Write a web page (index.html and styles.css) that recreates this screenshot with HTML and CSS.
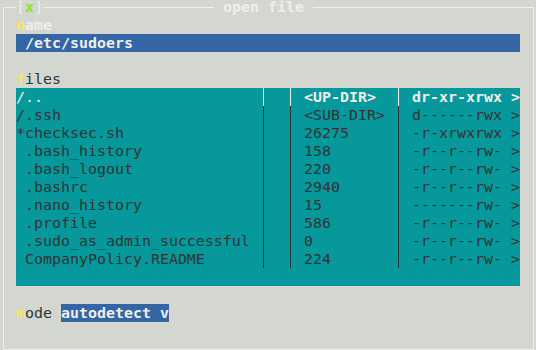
FILE: index.html
```html
<!DOCTYPE html>
<html lang="en">

<head>
    <meta charset="UTF-8">
    <meta name="viewport" content="width=device-width, initial-scale=1.0">
    <title>open file</title>
    <link rel="stylesheet" href="styles.css">
</head>

<body>
    <div class="frame">
        <!-- title bar over the top border -->
        <div class="titlebar">
            <span class="close">[<b class="green">x</b>]</span>
            <span class="title"> open file </span>
        </div>

        <div class="label focus"><b class="key">n</b>ame</div>
        <div class="input"> /etc/sudoers</div>

        <div class="label gap"><span class="key">f</span>iles</div>
        <div class="list">
            <div class="row current">
                <span>/..</span><span class="sep"></span><span class="sep cell"><b>&lt;UP-DIR&gt;</b></span><span class="sep cell"><b>dr-xr-xrwx &gt;</b></span>
            </div>
            <div class="row">
                <span>/.ssh</span><span class="sep"></span><span class="sep cell">&lt;SUB-DIR&gt;</span><span class="sep cell">d------rwx &gt;</span>
            </div>
            <div class="row">
                <span>*checksec.sh</span><span class="sep"></span><span class="sep cell">26275</span><span class="sep cell">-r-xrwxrwx &gt;</span>
            </div>
            <div class="row">
                <span> .bash_history</span><span class="sep"></span><span class="sep cell">158</span><span class="sep cell">-r--r--rw- &gt;</span>
            </div>
            <div class="row">
                <span> .bash_logout</span><span class="sep"></span><span class="sep cell">220</span><span class="sep cell">-r--r--rw- &gt;</span>
            </div>
            <div class="row">
                <span> .bashrc</span><span class="sep"></span><span class="sep cell">2940</span><span class="sep cell">-r--r--rw- &gt;</span>
            </div>
            <div class="row">
                <span> .nano_history</span><span class="sep"></span><span class="sep cell">15</span><span class="sep cell">-------rw- &gt;</span>
            </div>
            <div class="row">
                <span> .profile</span><span class="sep"></span><span class="sep cell">586</span><span class="sep cell">-r--r--rw- &gt;</span>
            </div>
            <div class="row">
                <span> .sudo_as_admin_successful</span><span class="sep"></span><span class="sep cell">0</span><span class="sep cell">-r--r--rw- &gt;</span>
            </div>
            <div class="row">
                <span> CompanyPolicy.README</span><span class="sep"></span><span class="sep cell">224</span><span class="sep cell">-r--r--rw- &gt;</span>
            </div>
        </div>

        <div class="label gap"><span class="key">m</span>ode <b class="select">autodetect v</b></div>
    </div>
</body>

</html>
```

FILE: styles.css
```css
html,
body {
    margin: 0;
    padding: 0;
}

body {
    background-color: #d3d7cf;
    color: #2e3436;
    font-family: "DejaVu Sans Mono", "Liberation Mono", monospace;
    font-size: 14.95px;
    line-height: 18px;
}

b {
    font-weight: bold;
}

/* dialog frame */
.frame {
    box-sizing: border-box;
    width: 531px;
    height: 343px;
    margin: 7px 0 0 3px;
    padding: 0 13px 0 12px;
    border: 1px solid #eeeeec;
}

.titlebar {
    display: flex;
    height: 18px;
    margin-top: -10px;
}

.close,
.title {
    white-space: pre;
    background-color: #d3d7cf;
    color: #eeeeec;
}

.title {
    margin-left: 171px;
    font-weight: bold;
}

.green {
    color: #8ae234;
}

.label {
    height: 18px;
    white-space: pre;
}

.focus {
    color: #eeeeec;
    font-weight: bold;
}

.key {
    color: #fce94f;
}

.gap {
    margin-top: 18px;
}

.input {
    height: 18px;
    white-space: pre;
    background-color: #3465a4;
    color: #eeeeec;
    font-weight: bold;
}

/* file list */
.list {
    background-color: #06989a;
    padding-bottom: 18px;
}

.row {
    display: grid;
    grid-template-columns: 247px 27px 108px 122px;
    height: 18px;
}

.row span {
    white-space: pre;
}

.sep {
    border-left: 1px solid #2e3436;
}

.cell {
    padding-left: 13px;
}

.current {
    color: #eeeeec;
}

.current .sep {
    border-left-color: #eeeeec;
}

.select {
    background-color: #3465a4;
    color: #eeeeec;
}
```
